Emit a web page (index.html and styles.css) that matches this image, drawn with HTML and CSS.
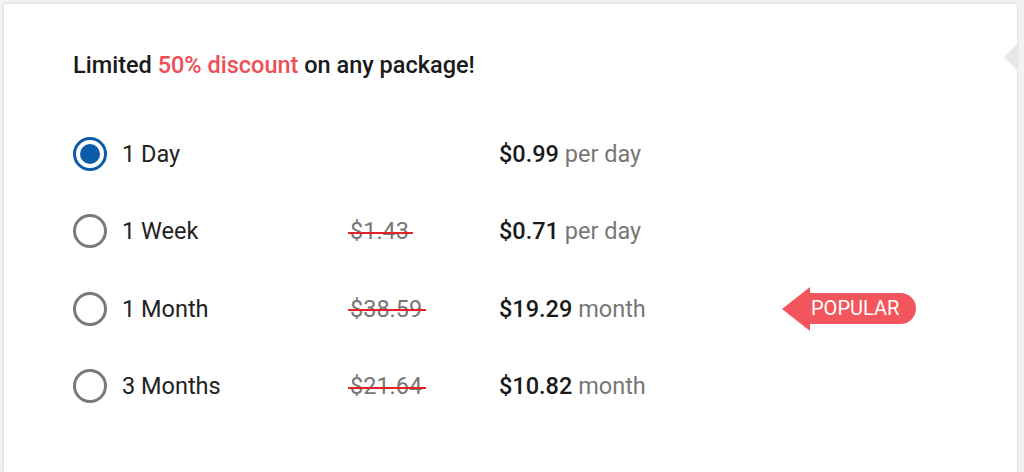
FILE: index.html
```html
<!DOCTYPE html>
<html>
<head>
<meta charset="utf-8">
<link rel="stylesheet" href="styles.css">
</head>
<body>
<div class="frame">
  <div class="card">
    <div class="notch"></div>
    <h2 class="headline">Limited <span class="hl">50% discount</span> on any package!</h2>
    <div class="plans">
      <div class="plan">
        <span class="radio checked"></span>
        <span class="name">1 Day</span>
        <span class="old"></span>
        <span class="price"><b>$0.99</b> per day</span>
        <span class="tag"></span>
      </div>
      <div class="plan">
        <span class="radio"></span>
        <span class="name">1 Week</span>
        <span class="old"><s>$1.43</s></span>
        <span class="price"><b>$0.71</b> per day</span>
        <span class="tag"></span>
      </div>
      <div class="plan">
        <span class="radio"></span>
        <span class="name">1 Month</span>
        <span class="old"><s>$38.59</s></span>
        <span class="price"><b>$19.29</b> month</span>
        <span class="tag"><span class="popular">POPULAR</span></span>
      </div>
      <div class="plan">
        <span class="radio"></span>
        <span class="name">3 Months</span>
        <span class="old"><s>$21.64</s></span>
        <span class="price"><b>$10.82</b> month</span>
        <span class="tag"></span>
      </div>
    </div>
  </div>
</div>
</body>
</html>
```
FILE: styles.css
```css
html, body {
  margin: 0;
  padding: 0;
}
body {
  background: #f2f2f2;
  font-family: Roboto, "Liberation Sans", sans-serif;
  width: 1024px;
  height: 472px;
  overflow: hidden;
}
.frame {
  padding: 4px 7px 0 4px;
}
.card {
  position: relative;
  background: #fff;
  height: 468px;
  box-shadow: 0 0 2px rgba(0,0,0,0.18);
  padding: 47px 0 0 69px;
  box-sizing: border-box;
}
.notch {
  position: absolute;
  right: 0;
  top: 40px;
  width: 0;
  height: 0;
  border-top: 13px solid transparent;
  border-bottom: 13px solid transparent;
  border-right: 13px solid #e8e8e8;
}
.headline {
  margin: 0;
  font-size: 23.5px;
  font-weight: 500;
  color: #1a1a1a;
  line-height: 28px;
}
.hl {
  color: #f14d57;
}
.plans {
  display: flex;
  flex-direction: column;
  margin-top: 36px;
}
.plan {
  display: flex;
  align-items: center;
  height: 77.5px;
}
.radio {
  width: 28px;
  height: 28px;
  border: 3px solid #7a7a7a;
  border-radius: 50%;
  box-sizing: content-box;
  flex: none;
  position: relative;
}
.radio.checked {
  border-color: #0b5bab;
}
.radio.checked::after {
  content: "";
  position: absolute;
  left: 4px;
  top: 4px;
  width: 20px;
  height: 20px;
  border-radius: 50%;
  background: #0b5bab;
}
.name {
  width: 228px;
  margin-left: 15px;
  font-size: 23.5px;
  color: #222;
}
.old {
  width: 149px;
  font-size: 23.5px;
  color: #777;
}
.old s {
  text-decoration: none;
  position: relative;
}
.old s::after {
  content: "";
  position: absolute;
  left: -2px;
  right: -4px;
  top: 52%;
  height: 2px;
  background: #e0242a;
}
.price {
  width: 283px;
  font-size: 23.5px;
  color: #777;
}
.price b {
  font-weight: 500;
  color: #1a1a1a;
}
.tag {
  display: flex;
}
.popular {
  position: relative;
  margin-left: 28px;
  height: 31px;
  line-height: 31px;
  padding: 0 17px 0 1px;
  background: #f2555c;
  color: #fff;
  font-size: 20px;
  border-radius: 0 16px 16px 0;
}
.popular::before {
  content: "";
  position: absolute;
  left: -28px;
  top: -6.5px;
  width: 0;
  height: 0;
  border-top: 22px solid transparent;
  border-bottom: 22px solid transparent;
  border-right: 28px solid #f2555c;
}
```
